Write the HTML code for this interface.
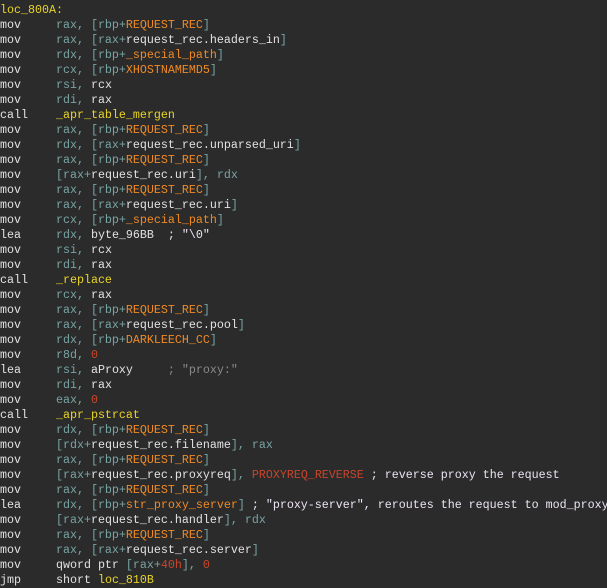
<!DOCTYPE html><html><head><style>
body{margin:0;background:#2b2b2b;width:607px;height:586px;overflow:hidden}
pre{margin:0;padding:3px 0 0 0;font-family:"Liberation Mono",monospace;font-size:11.67px;line-height:15px;color:#e2e2e2;white-space:pre}
.t{color:#78a4a4}.o{color:#f08a24}.y{color:#e8d428}.r{color:#c8462c}.g{color:#8a8a8a}.w{color:#e2e2e2}.c{color:#ece4f4}
</style></head><body><pre><span class="y">loc_800A:</span>
mov     <span class="t">rax, [rbp+</span><span class="o">REQUEST_REC</span><span class="t">]</span>
mov     <span class="t">rax, [rax+</span><span class="w">request_rec.headers_in</span><span class="t">]</span>
mov     <span class="t">rdx, [rbp+</span><span class="o">_special_path</span><span class="t">]</span>
mov     <span class="t">rcx, [rbp+</span><span class="o">XHOSTNAMEMD5</span><span class="t">]</span>
mov     <span class="t">rsi, </span><span class="w">rcx</span>
mov     <span class="t">rdi, </span><span class="w">rax</span>
call    <span class="y">_apr_table_mergen</span>
mov     <span class="t">rax, [rbp+</span><span class="o">REQUEST_REC</span><span class="t">]</span>
mov     <span class="t">rdx, [rax+</span><span class="w">request_rec.unparsed_uri</span><span class="t">]</span>
mov     <span class="t">rax, [rbp+</span><span class="o">REQUEST_REC</span><span class="t">]</span>
mov     <span class="t">[rax+</span><span class="w">request_rec.uri</span><span class="t">], rdx</span>
mov     <span class="t">rax, [rbp+</span><span class="o">REQUEST_REC</span><span class="t">]</span>
mov     <span class="t">rax, [rax+</span><span class="w">request_rec.uri</span><span class="t">]</span>
mov     <span class="t">rcx, [rbp+</span><span class="o">_special_path</span><span class="t">]</span>
lea     <span class="t">rdx, </span><span class="w">byte_96BB</span>  <span class="c">; "\0"</span>
mov     <span class="t">rsi, </span><span class="w">rcx</span>
mov     <span class="t">rdi, </span><span class="w">rax</span>
call    <span class="y">_replace</span>
mov     <span class="t">rcx, </span><span class="w">rax</span>
mov     <span class="t">rax, [rbp+</span><span class="o">REQUEST_REC</span><span class="t">]</span>
mov     <span class="t">rax, [rax+</span><span class="w">request_rec.pool</span><span class="t">]</span>
mov     <span class="t">rdx, [rbp+</span><span class="o">DARKLEECH_CC</span><span class="t">]</span>
mov     <span class="t">r8d, </span><span class="r">0</span>
lea     <span class="t">rsi, </span><span class="w">aProxy</span>     <span class="g">; "proxy:"</span>
mov     <span class="t">rdi, </span><span class="w">rax</span>
mov     <span class="t">eax, </span><span class="r">0</span>
call    <span class="y">_apr_pstrcat</span>
mov     <span class="t">rdx, [rbp+</span><span class="o">REQUEST_REC</span><span class="t">]</span>
mov     <span class="t">[rdx+</span><span class="w">request_rec.filename</span><span class="t">], rax</span>
mov     <span class="t">rax, [rbp+</span><span class="o">REQUEST_REC</span><span class="t">]</span>
mov     <span class="t">[rax+</span><span class="w">request_rec.proxyreq</span><span class="t">], </span><span class="r">PROXYREQ_REVERSE</span> <span class="c">; reverse proxy the request</span>
mov     <span class="t">rax, [rbp+</span><span class="o">REQUEST_REC</span><span class="t">]</span>
lea     <span class="t">rdx, [rbp+</span><span class="o">str_proxy_server</span><span class="t">]</span> <span class="c">; "proxy-server", reroutes the request to mod_proxy</span>
mov     <span class="t">[rax+</span><span class="w">request_rec.handler</span><span class="t">], rdx</span>
mov     <span class="t">rax, [rbp+</span><span class="o">REQUEST_REC</span><span class="t">]</span>
mov     <span class="t">rax, [rax+</span><span class="w">request_rec.server</span><span class="t">]</span>
mov     <span class="w">qword ptr </span><span class="t">[rax+</span><span class="r">40h</span><span class="t">], </span><span class="r">0</span>
jmp     <span class="w">short </span><span class="y">loc_810B</span>
</pre></body></html>
